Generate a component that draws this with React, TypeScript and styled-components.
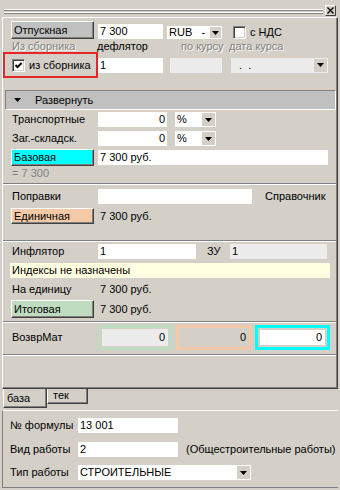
import styled, { createGlobalStyle } from "styled-components";

const GlobalStyle = createGlobalStyle`
  html, body {
    margin: 0;
    padding: 0;
    background: #d4d0c8;
  }
  body {
    font-family: "Liberation Sans", Arial, sans-serif;
    font-size: 11px;
    line-height: 13px;
    color: #000;
  }
  * {
    box-sizing: border-box;
  }
`;

const Window = styled.div`
  width: 340px;
  height: 490px;
  background: #d4d0c8;
  overflow: hidden;
  display: flex;
  flex-direction: column;
`;

const TitleBar = styled.div`
  height: 17px;
  flex-shrink: 0;
  display: flex;
  align-items: flex-start;
  gap: 2px;
  padding: 0 4px;
`;

const Grip = styled.div`
  flex: 1;
  height: 5px;
  margin-top: 9px;
  background: linear-gradient(
    to bottom,
    #fff 0 1px,
    #808080 1px 2px,
    transparent 2px 3px,
    #fff 3px 4px,
    #808080 4px 5px
  );
`;

const CloseBtn = styled.div`
  width: 11px;
  height: 11px;
  margin-top: 5px;
  border-top: 1px solid #fff;
  border-left: 1px solid #fff;
  border-right: 1px solid #404040;
  border-bottom: 1px solid #404040;
  display: flex;
  align-items: center;
  justify-content: center;
`;

const MainPanel = styled.div`
  margin-left: 2px;
  width: 336px;
  height: 372px;
  flex-shrink: 0;
  border-top: 1px solid #fff;
  border-left: 1px solid #fff;
  border-right: 1px solid #404040;
  border-bottom: 1px solid #404040;
  box-shadow: inset -1px -1px #808080;
  display: flex;
  flex-direction: column;
`;

const Row = styled.div<{ $h: number; $mt: number; $end?: boolean }>`
  display: flex;
  align-items: ${(p) => (p.$end ? "flex-end" : "center")};
  height: ${(p) => p.$h}px;
  margin-top: ${(p) => p.$mt}px;
  padding-left: 9px;
  flex-shrink: 0;
  white-space: nowrap;
`;

const Separator = styled.div<{ $mt: number }>`
  height: 2px;
  flex-shrink: 0;
  margin: ${(p) => p.$mt}px 1px 0 0;
  border-top: 1px solid #808080;
  border-bottom: 1px solid #fff;
`;

const Caption = styled.span<{ $w?: number; $ml?: number }>`
  flex-shrink: 0;
  width: ${(p) => (p.$w ? `${p.$w}px` : "auto")};
  margin-left: ${(p) => p.$ml ?? 0}px;
  white-space: nowrap;
`;

const DimText = styled(Caption)`
  color: #808080;
  text-shadow: 1px 1px 0 #fff;
`;

const Note = styled.span`
  color: #808080;
`;

const Value = styled.span`
  padding-left: 2px;
`;

const Btn = styled.div<{ $bg: string; $h: number }>`
  flex-shrink: 0;
  width: 83px;
  height: ${(p) => p.$h}px;
  margin: 0 4px 0 -1px;
  padding-left: 2px;
  background: ${(p) => p.$bg};
  border-top: 1px solid #fff;
  border-left: 1px solid #fff;
  border-right: 1px solid #404040;
  border-bottom: 1px solid #404040;
  box-shadow: inset -1px -1px #808080;
  display: flex;
  align-items: center;
`;

const Field = styled.div<{ $w: number; $bg?: string; $ml?: number; $right?: boolean }>`
  flex-shrink: 0;
  width: ${(p) => p.$w}px;
  height: 15px;
  margin-left: ${(p) => p.$ml ?? 0}px;
  padding: 0 2px;
  background: ${(p) => p.$bg ?? "#fff"};
  display: flex;
  align-items: center;
  justify-content: ${(p) => (p.$right ? "flex-end" : "flex-start")};
  white-space: nowrap;
  overflow: hidden;
`;

const Combo = styled.div<{ $w: number; $h?: number; $bg?: string; $ml?: number }>`
  flex-shrink: 0;
  width: ${(p) => p.$w}px;
  height: ${(p) => p.$h ?? 15}px;
  margin-left: ${(p) => p.$ml ?? 0}px;
  padding: 1px 1px 1px 2px;
  background: ${(p) => p.$bg ?? "#fff"};
  display: flex;
  align-items: center;
`;

const ComboText = styled.span`
  flex: 1;
  white-space: pre;
  overflow: hidden;
`;

const DropBtn = styled.span`
  height: 100%;
  aspect-ratio: 1;
  background: #d4d0c8;
  display: flex;
  align-items: center;
  justify-content: center;
`;

const Check = styled.span<{ $ml?: number }>`
  flex-shrink: 0;
  width: 13px;
  height: 13px;
  margin-left: ${(p) => p.$ml ?? 0}px;
  background: #fff;
  border-top: 1px solid #808080;
  border-left: 1px solid #808080;
  border-right: 1px solid #fff;
  border-bottom: 1px solid #fff;
  box-shadow: inset 1px 1px #404040, inset -1px -1px #d4d0c8;
  display: flex;
  align-items: center;
  justify-content: center;
`;

const Highlight = styled.div`
  flex-shrink: 0;
  width: 95px;
  height: 26px;
  margin-left: -9px;
  padding-left: 7px;
  border: 2px solid #e8262a;
  display: flex;
  align-items: center;
  gap: 4px;
`;

const SectionHeader = styled.div`
  flex-shrink: 0;
  height: 20px;
  margin: 12px 1px 0 2px;
  padding-left: 8px;
  background: #c0c0c0;
  border-top: 1px solid #808080;
  border-left: 1px solid #808080;
  border-right: 1px solid #fff;
  border-bottom: 1px solid #fff;
  display: flex;
  align-items: center;
  gap: 14px;
`;

const InfoBar = styled.div`
  flex-shrink: 0;
  height: 15px;
  width: 320px;
  margin: 4px 0 0 7px;
  padding-left: 2px;
  background: #ffffe1;
  display: flex;
  align-items: center;
`;

const FrameBox = styled.div<{ $w: number; $frame: string; $fill: string; $pad: number; $ml?: number }>`
  flex-shrink: 0;
  width: ${(p) => p.$w}px;
  height: 25px;
  margin-left: ${(p) => p.$ml ?? 0}px;
  border: 3px solid ${(p) => p.$frame};
  padding: ${(p) => p.$pad}px;
  background: #d4d0c8;
  display: flex;
`;

const FrameValue = styled.div<{ $fill: string }>`
  flex: 1;
  background: ${(p) => p.$fill};
  display: flex;
  align-items: center;
  justify-content: flex-end;
  padding-right: 3px;
`;

const TabStrip = styled.div`
  height: 21px;
  flex-shrink: 0;
  display: flex;
  align-items: flex-start;
  padding-left: 3px;
`;

const Tab = styled.div<{ $active?: boolean }>`
  height: ${(p) => (p.$active ? 19 : 15)}px;
  width: ${(p) => (p.$active ? 44 : 41)}px;
  padding: ${(p) => (p.$active ? "0 0 2px 3px" : "0 0 1px 5px")};
  border-left: 1px solid #fff;
  border-right: 1px solid #404040;
  border-bottom: 1px solid #404040;
  box-shadow: inset -1px -1px #808080;
  display: flex;
  align-items: flex-end;
`;

const LowerPanel = styled.div`
  flex-shrink: 0;
  height: 78px;
  margin-left: 2px;
  width: 336px;
  border-top: 1px solid #fff;
  border-left: 1px solid #808080;
  border-bottom: 1px solid #808080;
  display: flex;
  flex-direction: column;
`;

const LowerRow = styled(Row)`
  padding-left: 7px;
`;

const Arrow = () => (
  <svg width="7" height="4" viewBox="0 0 7 4">
    <polygon points="0,0 7,0 3.5,4" fill="#000" />
  </svg>
);

const Dropdown = ({ text, w, h, bg, ml }: { text: string; w: number; h?: number; bg?: string; ml?: number }) => (
  <Combo $w={w} $h={h} $bg={bg} $ml={ml}>
    <ComboText>{text}</ComboText>
    <DropBtn>
      <Arrow />
    </DropBtn>
  </Combo>
);

const CheckMark = () => (
  <svg width="9" height="9" viewBox="0 0 9 9">
    <path d="M1.5 4 L3.5 6.2 L7.6 2" stroke="#000" strokeWidth="1.9" fill="none" />
  </svg>
);

export default function App() {
  return (
    <>
      <GlobalStyle />
      <Window>
        <TitleBar>
          <Grip />
          <CloseBtn>
            <svg width="7" height="7" viewBox="0 0 7 7">
              <path d="M0.5 0.5 L6.5 6.5 M6.5 0.5 L0.5 6.5" stroke="#000" strokeWidth="1.4" />
            </svg>
          </CloseBtn>
        </TitleBar>

        <MainPanel>
          <Row $h={18} $mt={3} $end>
            <Btn $bg="#c0c0c0" $h={18}>Отпускная</Btn>
            <Field $w={65}>7 300</Field>
            <Dropdown text={"RUB   -"} w={55} h={13} ml={4} />
            <Check $ml={11} />
            <Caption $ml={4}>с НДС</Caption>
          </Row>
          <Row $h={12} $mt={1}>
            <DimText $w={85}>Из сборника</DimText>
            <Caption $w={84}>дефлятор</Caption>
            <DimText $w={48}>по курсу</DimText>
            <DimText>дата курса</DimText>
          </Row>
          <Row $h={26} $mt={0}>
            <Highlight>
              <Check>
                <CheckMark />
              </Check>
              <span>из сборника</span>
            </Highlight>
            <Field $w={65}>1</Field>
            <Field $w={52} $ml={7} $bg="#ececec" />
            <Dropdown text={"  .  ."} w={97} ml={9} bg="#ececec" />
          </Row>

          <SectionHeader>
            <Arrow />
            <span>Развернуть</span>
          </SectionHeader>
          <Row $h={15} $mt={2}>
            <Caption $w={86}>Транспортные</Caption>
            <Field $w={69} $right>0</Field>
            <Dropdown text="%" w={41} ml={8} />
          </Row>
          <Row $h={15} $mt={4}>
            <Caption $w={86}>Заг.-складск.</Caption>
            <Field $w={69} $right>0</Field>
            <Dropdown text="%" w={41} ml={8} />
          </Row>
          <Row $h={17} $mt={3}>
            <Btn $bg="#00ffff" $h={17}>Базовая</Btn>
            <Field $w={230}>7 300 руб.</Field>
          </Row>
          <Row $h={13} $mt={1}>
            <Note>= 7 300</Note>
          </Row>
          <Separator $mt={3} />

          <Row $h={16} $mt={3}>
            <Caption $w={86}>Поправки</Caption>
            <Field $w={154} />
            <Caption $ml={13}>Справочник</Caption>
          </Row>
          <Row $h={16} $mt={4}>
            <Btn $bg="#f3c9a7" $h={16}>Единичная</Btn>
            <Value>7 300 руб.</Value>
          </Row>
          <Separator $mt={16} />

          <Row $h={15} $mt={2}>
            <Caption $w={86}>Инфлятор</Caption>
            <Field $w={98}>1</Field>
            <Caption $w={23} $ml={11}>ЗУ</Caption>
            <Field $w={97} $bg="#ececec">1</Field>
          </Row>
          <InfoBar>Индексы не назначены</InfoBar>
          <Row $h={14} $mt={4}>
            <Caption $w={86}>На единицу</Caption>
            <Value>7 300 руб.</Value>
          </Row>
          <Row $h={18} $mt={4}>
            <Btn $bg="#c0dcc0" $h={18}>Итоговая</Btn>
            <Value>7 300 руб.</Value>
          </Row>
          <Separator $mt={3} />

          <Row $h={25} $mt={2}>
            <Caption $w={86}>ВозврМат</Caption>
            <FrameBox $w={74} $frame="#c0dcc0" $fill="#ececec" $pad={1}>
              <FrameValue $fill="#ececec">0</FrameValue>
            </FrameBox>
            <FrameBox $w={76} $ml={4} $frame="#f3c9a7" $fill="#d4d0c8" $pad={0}>
              <FrameValue $fill="#d4d0c8">0</FrameValue>
            </FrameBox>
            <FrameBox $w={75} $ml={3} $frame="#00ffff" $fill="#fff" $pad={2}>
              <FrameValue $fill="#fff">0</FrameValue>
            </FrameBox>
          </Row>
          <Separator $mt={4} />
        </MainPanel>

        <TabStrip>
          <Tab $active>база</Tab>
          <Tab>тек</Tab>
        </TabStrip>

        <LowerPanel>
          <LowerRow $h={15} $mt={7}>
            <Caption $w={68}>№ формулы</Caption>
            <Field $w={100}>13 001</Field>
          </LowerRow>
          <LowerRow $h={15} $mt={9}>
            <Caption $w={68}>Вид работы</Caption>
            <Field $w={100}>2</Field>
            <Caption $ml={8}>(Общестроительные работы)</Caption>
          </LowerRow>
          <LowerRow $h={15} $mt={8}>
            <Caption $w={68}>Тип работы</Caption>
            <Dropdown text="СТРОИТЕЛЬНЫЕ" w={173} />
          </LowerRow>
        </LowerPanel>
      </Window>
    </>
  );
}
